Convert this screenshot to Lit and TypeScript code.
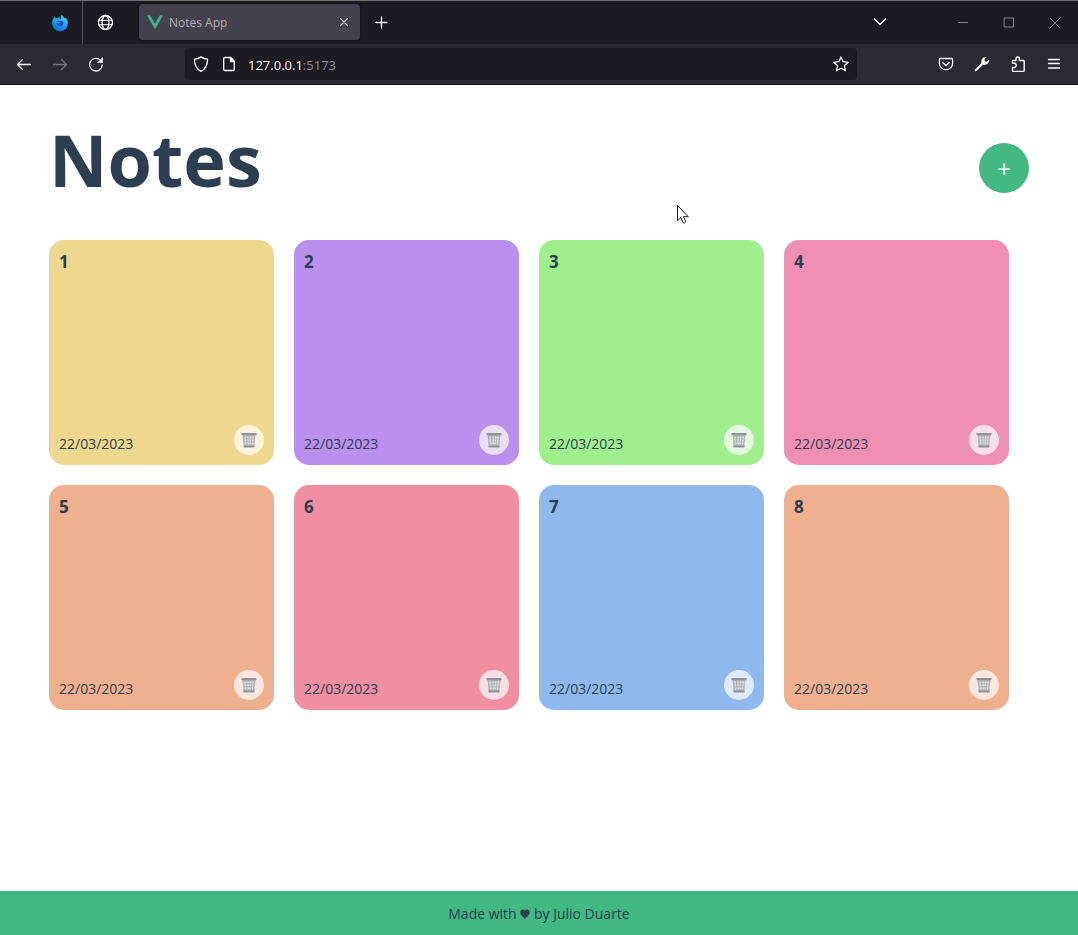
import { LitElement, html, css, svg } from "lit";
import { customElement, property, state } from "lit/decorators.js";
import { styleMap } from "lit/directives/style-map.js";

interface Note {
  id: number;
  text: string;
  date: string;
  color: string;
}

const seed: Note[] = [
  "#eed88f",
  "#bb8fee",
  "#9fef8f",
  "#ef8fb3",
  "#efb08f",
  "#ef8fa1",
  "#8fb9ed",
  "#eeb08f",
].map((color, i) => ({ id: i + 1, text: String(i + 1), date: "22/03/2023", color }));

const resetButton = css`
  button {
    border: 0;
    padding: 0;
    margin: 0;
    background: none;
    color: inherit;
    font: inherit;
    display: grid;
    place-items: center;
  }
  svg {
    display: block;
  }
`;

@customElement("browser-bar")
class BrowserBar extends LitElement {
  static styles = [
    resetButton,
    css`
      :host {
        display: block;
        background: #1c1b22;
        color: #fbfbfe;
        border-top: 1px solid #6f6f70;
        border-bottom: 1px solid #0c0c0d;
      }
      .tabs {
        display: flex;
        height: 43px;
        align-items: center;
      }
      .fill {
        flex: 1;
      }
      .view {
        height: 43px;
        box-sizing: border-box;
        padding-left: 38px;
        border-right: 1px solid #56555c;
        width: 83px;
      }
      .pinned,
      .tab,
      .new,
      .list {
        margin-bottom: 1px;
      }
      .pinned {
        width: 46px;
        height: 36px;
      }
      .tab {
        width: 221px;
        height: 36px;
        margin-left: 10px;
        box-sizing: border-box;
        padding: 0 8px;
        display: flex;
        align-items: center;
        gap: 6px;
        background: #42414d;
        border-radius: 4px;
        box-shadow: 0 0 3px rgba(0, 0, 0, 0.5);
        color: #b2b1b7;
        font-size: 12px;
        line-height: 18px;
      }
      .tab span {
        flex: 1;
        padding-top: 2px;
      }
      .close {
        width: 16px;
        height: 16px;
        color: #e4e4e8;
      }
      .new {
        width: 44px;
        height: 36px;
      }
      .list {
        width: 46px;
        height: 36px;
        margin-right: 37px;
      }
      .win {
        width: 46px;
        height: 43px;
        color: #85848a;
      }
      .nav {
        display: flex;
        height: 40px;
        align-items: center;
        padding: 0 6px;
        background: #2b2a33;
      }
      .tool {
        width: 36px;
        height: 32px;
      }
      .tool:disabled {
        color: #77767d;
      }
      .address {
        flex: 1;
        display: flex;
        align-items: center;
        height: 32px;
        margin: 0 71px;
        border-radius: 4px;
        background: #1c1b22;
      }
      .icon {
        width: 32px;
        height: 32px;
      }
      .page {
        width: 24px;
      }
      .url {
        flex: 1;
        font-size: 13px;
        line-height: 20px;
        padding: 2px 0 0 7px;
      }
      .port {
        color: #8f8e95;
      }
    `,
  ];

  private icon(body: unknown) {
    return html`<svg width="16" height="16" viewBox="0 0 16 16" fill="none" stroke="currentColor" stroke-width="1.3" stroke-linecap="round" stroke-linejoin="round" aria-hidden="true">${body}</svg>`;
  }

  render() {
    return html`
      <div class="tabs">
        <button class="view" aria-label="Firefox View">
          <svg width="18" height="18" viewBox="0 0 18 18" aria-hidden="true">
            <defs>
              <linearGradient id="fx" x1="0.8" y1="0" x2="0.3" y2="1">
                <stop offset="0" stop-color="#35e0f5" />
                <stop offset="0.5" stop-color="#1fa4f8" />
                <stop offset="1" stop-color="#0a6cea" />
              </linearGradient>
            </defs>
            <path fill="url(#fx)" d="M2.6 4.2 3.4 2.6 4.8 4.2 6.8 4.1C7.3 3.4 8 3 8.6 2.8L8.2 4.3 10 5.2C9.4 3.4 9.8 1.6 11 .6 11.2 2.2 12.7 3 13.6 4.3L14 3.3C15.8 5 16.9 7 16.9 9.3A7.9 7.9 0 0 1 1.1 9.3C1 7.3 1.6 5.6 2.6 4.2Z" />
            <path fill="#1f4cc0" d="M6 7.2C7 6 8.3 6.4 9 7L11.4 7.2C13 8.6 12.6 11.6 10 12.2 7.2 12.7 5.4 11 5.3 8.8L7.3 9.7 9.3 8.3 7.4 8Z" />
          </svg>
        </button>
        <button class="pinned" aria-label="Pinned tab">
          ${this.icon(svg`<circle cx="7.500" cy="8.500" r="7"/><ellipse cx="7.500" cy="8.500" rx="3.400" ry="7"/><path d="M1 6.300h13M1 10.700h13" stroke-width="1"/>`)}
        </button>
        <div class="tab">
          <svg width="16" height="16" viewBox="0 0 16 16" aria-hidden="true">
            <path fill="#41b883" d="M0 1.2h3.2L8 9.5l4.8-8.3H16L8 15Z" />
            <path fill="#35495e" d="M3.2 1.2h2.9L8 4.5l1.9-3.3h2.9L8 9.5Z" />
          </svg>
          <span>Notes App</span>
          <button class="close" aria-label="Close tab">
            ${this.icon(svg`<path d="m4.500 4.500 7 7m0-7-7 7" stroke-width="1.200"/>`)}
          </button>
        </div>
        <button class="new" aria-label="New tab">${this.icon(svg`<path d="M7.500 3v11M2 8.500h11"/>`)}</button>
        <div class="fill"></div>
        <button class="list" aria-label="List all tabs">${this.icon(svg`<path d="m2.500 5 5.500 5.500L13.500 5"/>`)}</button>
        <button class="win" aria-label="Minimize">${this.icon(svg`<path d="M3 7.500h10" stroke-width="1" stroke-linecap="butt"/>`)}</button>
        <button class="win" aria-label="Maximize">${this.icon(svg`<path d="M3.500 3h9v9h-9z" stroke-width="1"/>`)}</button>
        <button class="win" aria-label="Close window">${this.icon(svg`<path d="m3 3 10 10M13 3 3 13" stroke-width="1"/>`)}</button>
      </div>
      <div class="nav">
        <button class="tool" aria-label="Back">${this.icon(svg`<path d="M14.500 8.500H1.500M6.500 3.500l-5 5 5 5"/>`)}</button>
        <button class="tool" aria-label="Forward" disabled>${this.icon(svg`<path d="M1.500 8.500h13M9.500 3.500l5 5-5 5"/>`)}</button>
        <button class="tool" aria-label="Reload">
          ${this.icon(svg`<path d="M14.200 9A6.300 6.300 0 1 1 12.500 4.400"/><path d="M14.600 1.800V6.500H9.900z" fill="currentColor" stroke-width="0.600"/>`)}
        </button>
        <div class="address">
          <button class="icon" aria-label="Tracking protection">
            ${this.icon(svg`<path d="M8 .9C6 2.300 3.700 3 1.500 3.200 1.400 8.500 3 12.800 8 15.300 13 12.800 14.600 8.500 14.500 3.200 12.300 3 10 2.300 8 .9Z"/>`)}
          </button>
          <button class="icon page" aria-label="Site information">
            ${this.icon(svg`<path d="M9.500 1.500H4A1.200 1.200 0 0 0 2.700 2.700v10.600A1.200 1.200 0 0 0 4 14.500h8a1.200 1.200 0 0 0 1.300-1.200V5.500z"/><path d="M9.500 1.500v4h4z" fill="currentColor"/>`)}
          </button>
          <div class="url">127.0.0.1<span class="port">:5173</span></div>
          <button class="icon" aria-label="Bookmark this page">
            ${this.icon(svg`<path d="m8 1 2.100 4.700 5.100.6-3.800 3.500 1.100 5L8 12.300l-4.500 2.500 1.100-5L.8 6.300l5.100-.6z"/>`)}
          </button>
        </div>
        <button class="tool" aria-label="Save to Pocket">
          ${this.icon(svg`<path d="M2.600 2.500h10.800a1.200 1.200 0 0 1 1.200 1.200v3.800a6.600 6.200 0 0 1-13.200 0V3.700a1.200 1.200 0 0 1 1.200-1.200Z"/><path d="M4.700 6.500 8 9.500l3.300-3" stroke-width="1.400"/>`)}
        </button>
        <button class="tool" aria-label="Developer tools">
          ${this.icon(svg`<path d="M1.700 14.300 9 7" stroke-width="2.200"/><path fill="currentColor" stroke="none" d="M12.600 1.200 10.400 3.600l.4 1.700 1.800.5L15 3.500c.5 2.700-1.300 5.300-4.200 5.200l-3 .500-1-1 .7-3C7.400 2.400 9.900.6 12.600 1.200Z"/>`)}
        </button>
        <button class="tool" aria-label="Extensions">
          ${this.icon(svg`<path d="M2.500 7.300V5.200a.7.7 0 0 1 .7-.7H6V2.700a1.700 1.700 0 0 1 3.400 0V4.500h4.100a.7.7 0 0 1 .7.700v9.600a.7.7 0 0 1-.7.700H3.200a.7.7 0 0 1-.7-.7V11.500h1.600a2.100 2.100 0 0 0 0-4.200H2.500" stroke-width="1.400"/>`)}
        </button>
        <button class="tool" aria-label="Menu">${this.icon(svg`<path d="M2.500 3.500h11M2.500 7.500h11M2.500 12h11"/>`)}</button>
      </div>
    `;
  }
}

@customElement("note-card")
class NoteCard extends LitElement {
  @property({ attribute: false }) note!: Note;

  static styles = [
    resetButton,
    css`
      .card {
        display: flex;
        flex-direction: column;
        justify-content: space-between;
        box-sizing: border-box;
        width: 225px;
        height: 225px;
        padding: 10px;
        border-radius: 15px;
      }
      .text {
        margin: 0;
        font-size: 17px;
        line-height: 24px;
        font-weight: 700;
      }
      .foot {
        display: flex;
        justify-content: space-between;
        align-items: flex-end;
      }
      .date {
        font-size: 14px;
        line-height: 22px;
      }
      .delete {
        width: 30px;
        height: 30px;
        border-radius: 50%;
        background: rgba(255, 255, 255, 0.7);
      }
    `,
  ];

  render() {
    const { text, date, color } = this.note;
    return html`
      <article class="card" style=${styleMap({ backgroundColor: color })}>
        <p class="text">${text}</p>
        <div class="foot">
          <time class="date">${date}</time>
          <button class="delete" aria-label="Delete note ${text}" @click=${() => this.dispatchEvent(new CustomEvent("remove"))}>
            <svg width="16" height="16" viewBox="0 0 16 16" aria-hidden="true">
              <path d="M1.500 2.500h13L13.300 15H2.700Z" fill="#b4b6ba" />
              <path d="M4 4.500 5 13M7 4.500l.3 8.500M9.700 4.500 9 13M12.300 4.500 11.300 13" stroke="#e9e9e9" stroke-width="1.300" stroke-dasharray="1.800 1.200" />
              <path d="M.5 1h15v2.200H.5zM2.500 13.500h11v2h-11z" fill="#909297" />
            </svg>
          </button>
        </div>
      </article>
    `;
  }
}

@customElement("app-root")
class AppRoot extends LitElement {
  @state() private notes: Note[] = seed;

  static styles = [
    resetButton,
    css`
      :host {
        display: flex;
        flex-direction: column;
        min-height: 100vh;
        background: #fff;
        color: #2c3e50;
        font-family: "Open Sans", "Noto Sans", sans-serif;
      }
      main {
        flex: 1;
        width: 100%;
        max-width: 980px;
        margin: 0 auto;
      }
      header {
        display: flex;
        justify-content: space-between;
        align-items: center;
        padding: 20px 0 27px;
      }
      h1 {
        margin: 0;
        font-size: 72px;
        line-height: 108px;
        font-weight: 700;
      }
      header .add {
        width: 50px;
        height: 50px;
        margin-top: 18px;
        border-radius: 50%;
        background: #42b883;
        color: #fff;
        font-size: 24px;
      }
      .grid {
        display: flex;
        flex-wrap: wrap;
        gap: 20px;
      }
      footer {
        padding: 11px 10px 9px;
        background: #42b883;
        text-align: center;
        font-size: 14px;
        line-height: 24px;
      }
      .heart {
        display: inline-block;
      }
      .cursor {
        position: absolute;
        left: 676px;
        top: 204px;
      }
    `,
  ];

  private add() {
    const id = Math.max(0, ...this.notes.map((n) => n.id)) + 1;
    const color = seed[(id - 1) % seed.length].color;
    this.notes = [...this.notes, { id, text: String(id), date: new Date().toLocaleDateString("en-GB"), color }];
  }

  private remove(id: number) {
    this.notes = this.notes.filter((n) => n.id !== id);
  }

  render() {
    return html`
      <browser-bar></browser-bar>
      <main>
        <header>
          <h1>Notes</h1>
          <button class="add" aria-label="Add note" @click=${this.add}>+</button>
        </header>
        <section class="grid">
          ${this.notes.map((n) => html`<note-card .note=${n} @remove=${() => this.remove(n.id)}></note-card>`)}
        </section>
      </main>
      <footer>
        Made with
        <svg class="heart" width="10" height="10" viewBox="0 0 10 10" role="img" aria-label="love">
          <path fill="#2c3e50" d="M5 10C4 8 .3 6.500.3 3.200.3.400 3.700-.400 5 1.900 6.300-.400 9.700.400 9.700 3.200 9.700 6.500 6 8 5 10Z" />
        </svg>
        by Julio Duarte
      </footer>
      <svg class="cursor" width="14" height="21" viewBox="0 0 14 21" aria-hidden="true">
        <path d="M1.500 1.500v15.200l3.300-3.200 2 4.700a1.400 1.400 0 0 0 2.600-1.100L7.500 12.700h4.800Z" fill="#fff" stroke="#1b1a26" stroke-width="1" />
      </svg>
    `;
  }
}
